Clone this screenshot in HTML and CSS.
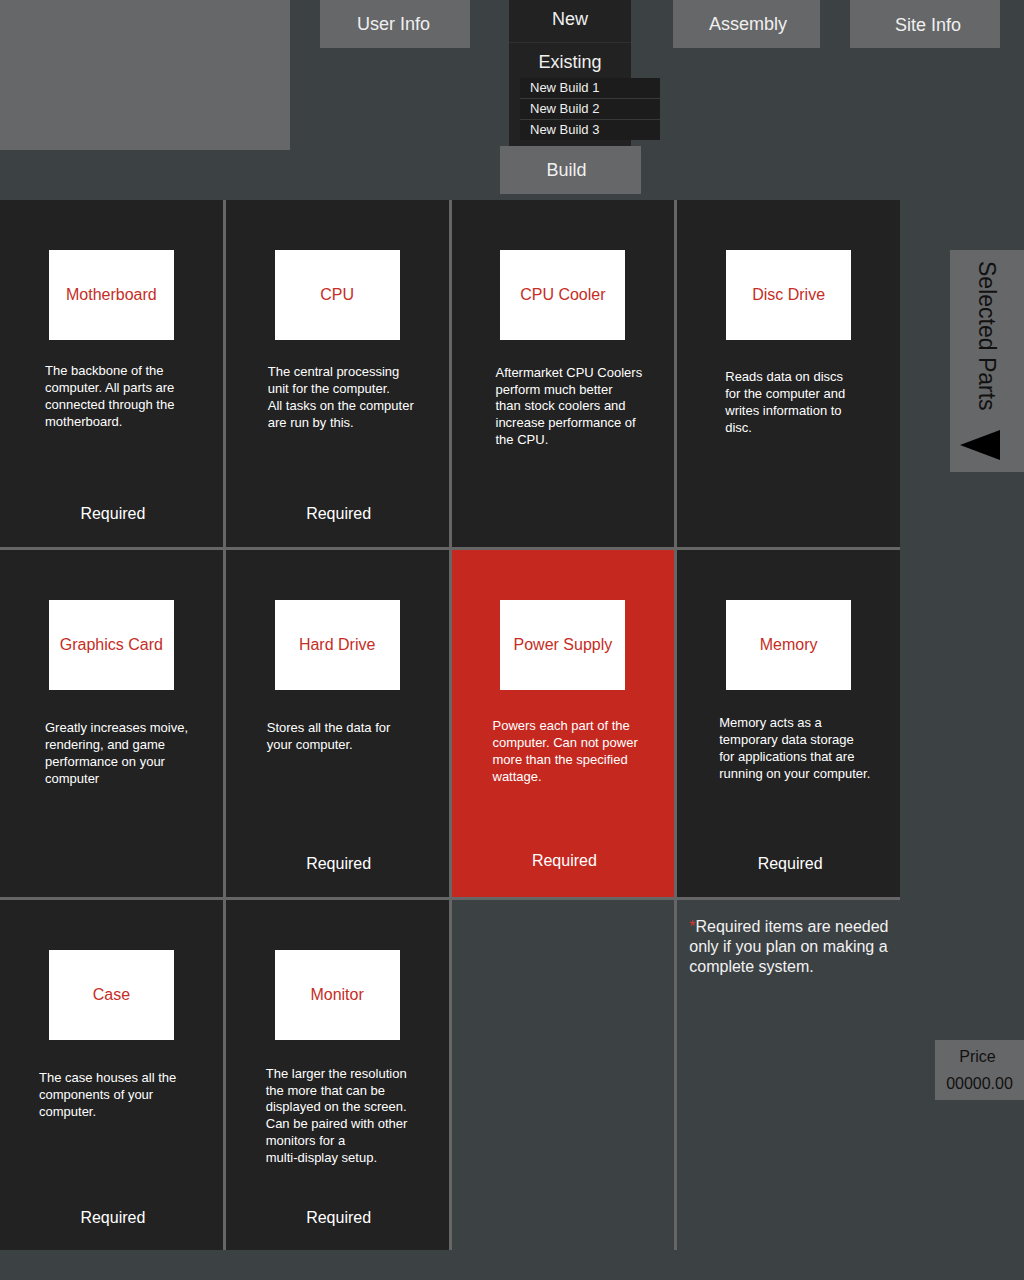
FILE: index.html
```html
<!DOCTYPE html>
<html lang="en">
<head>
<meta charset="utf-8">
<title>PC Builder</title>
<link rel="stylesheet" href="styles.css">
</head>
<body>
<header class="top">
  <div class="logo"></div>
  <a class="nav-btn nav-user">User Info</a>
  <div class="build-group">
    <div class="build-menu">
      <div class="menu-item menu-new">New</div>
      <div class="menu-item menu-existing">Existing</div>
      <ul class="submenu">
        <li>New Build 1</li>
        <li>New Build 2</li>
        <li>New Build 3</li>
      </ul>
    </div>
    <a class="nav-btn nav-build">Build</a>
  </div>
  <a class="nav-btn nav-assembly">Assembly</a>
  <a class="nav-btn nav-site">Site Info</a>
</header>

<main class="main">
  <section class="parts">
    <div class="card">
      <div class="thumb">Motherboard</div>
      <p class="desc d-mb">The backbone of the<br>computer. All parts are<br>connected through the<br>motherboard.</p>
      <div class="req">Required</div>
    </div>
    <div class="card">
      <div class="thumb">CPU</div>
      <p class="desc d-cpu">The central processing<br>unit for the computer.<br>All tasks on the computer<br>are run by this.</p>
      <div class="req">Required</div>
    </div>
    <div class="card">
      <div class="thumb">CPU Cooler</div>
      <p class="desc d-cool">Aftermarket CPU Coolers<br>perform much better<br>than stock coolers and<br>increase performance of<br>the CPU.</p>
    </div>
    <div class="card">
      <div class="thumb">Disc Drive</div>
      <p class="desc d-disc">Reads data on discs<br>for the computer and<br>writes information to<br>disc.</p>
    </div>

    <div class="card">
      <div class="thumb">Graphics Card</div>
      <p class="desc d-gpu">Greatly increases moive,<br>rendering, and game<br>performance on your<br>computer</p>
    </div>
    <div class="card">
      <div class="thumb">Hard Drive</div>
      <p class="desc d-hdd">Stores all the data for<br>your computer.</p>
      <div class="req">Required</div>
    </div>
    <div class="card card-active">
      <div class="thumb">Power Supply</div>
      <p class="desc d-psu">Powers each part of the<br>computer. Can not power<br>more than the specified<br>wattage.</p>
      <div class="req req-psu">Required</div>
    </div>
    <div class="card">
      <div class="thumb">Memory</div>
      <p class="desc d-mem">Memory acts as a<br>temporary data storage<br>for applications that are<br>running on your computer.</p>
      <div class="req">Required</div>
    </div>

    <div class="card">
      <div class="thumb">Case</div>
      <p class="desc d-case">The case houses all the<br>components of your<br>computer.</p>
      <div class="req req-last">Required</div>
    </div>
    <div class="card">
      <div class="thumb">Monitor</div>
      <p class="desc d-mon">The larger the resolution<br>the more that can be<br>displayed on the screen.<br>Can be paired with other<br>monitors for a<br>multi-display setup.</p>
      <div class="req req-last">Required</div>
    </div>
    <div class="cell-empty"></div>
    <div class="cell-empty cell-note">
      <p class="note"><span class="star">*</span>Required items are needed<br>only if you plan on making a<br>complete system.</p>
    </div>
  </section>

  <aside class="sidebar">
    <div class="selected">
      <span class="selected-label">Selected Parts</span>
      <span class="arrow"></span>
    </div>
    <div class="price">
      <div class="price-label">Price</div>
      <div class="price-value">00000.00</div>
    </div>
  </aside>
</main>
</body>
</html>
```

FILE: styles.css
```css
* { box-sizing: border-box; }

html, body {
  margin: 0;
  padding: 0;
}

body {
  width: 1024px;
  min-height: 1280px;
  background: #3c4144;
  font-family: "Liberation Sans", Arial, sans-serif;
  color: #f2f2f2;
}

/* ---------- header ---------- */
.top {
  display: flex;
  align-items: flex-start;
  height: 200px;
}

.logo {
  width: 290px;
  height: 150px;
  background: #666768;
}

.nav-btn {
  display: flex;
  align-items: center;
  justify-content: center;
  height: 48px;
  background: #666768;
  color: #f0f0f0;
  font-size: 18px;
  text-decoration: none;
}

.nav-user { width: 150px; margin-left: 30px; padding-right: 3px; }
.nav-assembly { width: 147px; margin-left: 32px; padding-left: 3px; }
.nav-site { width: 150px; margin-left: 30px; padding-top: 3px; padding-left: 6px; }

.build-group {
  width: 141px;
  margin-left: 30px;
  display: flex;
  flex-direction: column;
}

.build-menu {
  position: relative;
  width: 122px;
  height: 146px;
  margin-left: 9px;
  background: #222222;
}

.menu-item {
  display: flex;
  align-items: center;
  justify-content: center;
  font-size: 18px;
  color: #f0f0f0;
}

.menu-new {
  height: 43px;
  border-bottom: 1px solid #303030;
  padding-bottom: 3px;
}

.menu-existing {
  height: 35px;
  padding-top: 3px;
}

.submenu {
  position: absolute;
  top: 78px;
  left: 11px;
  width: 140px;
  margin: 0;
  padding: 0;
  list-style: none;
}

.submenu li {
  height: 21px;
  line-height: 20px;
  padding-left: 10px;
  font-size: 13px;
  color: #f0f0f0;
  background: #1c1c1c;
  border-bottom: 1px solid #383838;
}

.submenu li:last-child { height: 20px; border-bottom: 0; }

.nav-build {
  width: 141px;
  height: 48px;
  padding-right: 8px;
}

/* ---------- main ---------- */
.main {
  display: flex;
  align-items: flex-start;
}

.parts {
  width: 900px;
  display: grid;
  grid-template-columns: repeat(4, 1fr);
  grid-template-rows: 347px 347px 350px;
  gap: 3px;
  background: #666666;
}

.card {
  display: flex;
  flex-direction: column;
  background: #222222;
}

.card-active { background: #c4281f; }

.thumb {
  width: 125px;
  height: 90px;
  margin: 50px auto 0;
  background: #ffffff;
  color: #c62d25;
  font-size: 16px;
  display: flex;
  align-items: center;
  justify-content: center;
}

.desc {
  margin: 22px 0 0;
  font-size: 13px;
  line-height: 17px;
  color: #ffffff;
  white-space: nowrap;
}

.d-mb   { margin-top: 22px; padding-left: 45px; }
.d-cpu  { margin-top: 23px; padding-left: 42px; }
.d-cool { margin-top: 25px; padding-left: 44px; line-height: 16.7px; }
.d-disc { margin-top: 28px; padding-left: 48px; }
.d-gpu  { margin-top: 29px; padding-left: 45px; }
.d-hdd  { margin-top: 29px; padding-left: 41px; }
.d-psu  { margin-top: 27px; padding-left: 41px; }
.d-mem  { margin-top: 24px; padding-left: 42px; }
.d-case { margin-top: 29px; padding-left: 39px; }
.d-mon  { margin-top: 26px; padding-left: 40px; line-height: 16.7px; }

.req {
  margin-top: auto;
  padding-bottom: 23px;
  text-align: center;
  font-size: 16px;
  line-height: 20px;
  color: #ffffff;
}

.card .req { padding-left: 3px; }
.req-psu { padding-bottom: 26px; }
.req-last { padding-bottom: 22px; }

.cell-empty { background: #3c4144; }

.cell-note { padding: 17px 0 0 12px; }

.note {
  margin: 0;
  font-size: 16px;
  line-height: 20px;
  color: #f2f2f2;
  white-space: nowrap;
}

.star { color: #d0372d; }

/* ---------- sidebar ---------- */
.sidebar {
  flex: 1;
  display: flex;
  flex-direction: column;
  align-items: flex-end;
}

.selected {
  margin-top: 50px;
  width: 74px;
  height: 222px;
  background: #666768;
  display: flex;
  flex-direction: column;
  align-items: center;
}

.selected-label {
  margin-top: 11px;
  writing-mode: vertical-rl;
  font-size: 23px;
  line-height: 26px;
  color: #111111;
}

.arrow {
  align-self: flex-start;
  margin: auto 0 12px 10px;
  width: 0;
  height: 0;
  border-top: 15px solid transparent;
  border-bottom: 15px solid transparent;
  border-right: 40px solid #000000;
}

.price {
  margin-top: 568px;
  width: 89px;
  height: 60px;
  background: #666768;
  color: #111111;
  text-align: center;
  padding-top: 7px;
}

.price-label {
  font-size: 16px;
  line-height: 20px;
  padding-right: 4px;
}

.price-value {
  margin-top: 7px;
  font-size: 16px;
  line-height: 20px;
}
```
